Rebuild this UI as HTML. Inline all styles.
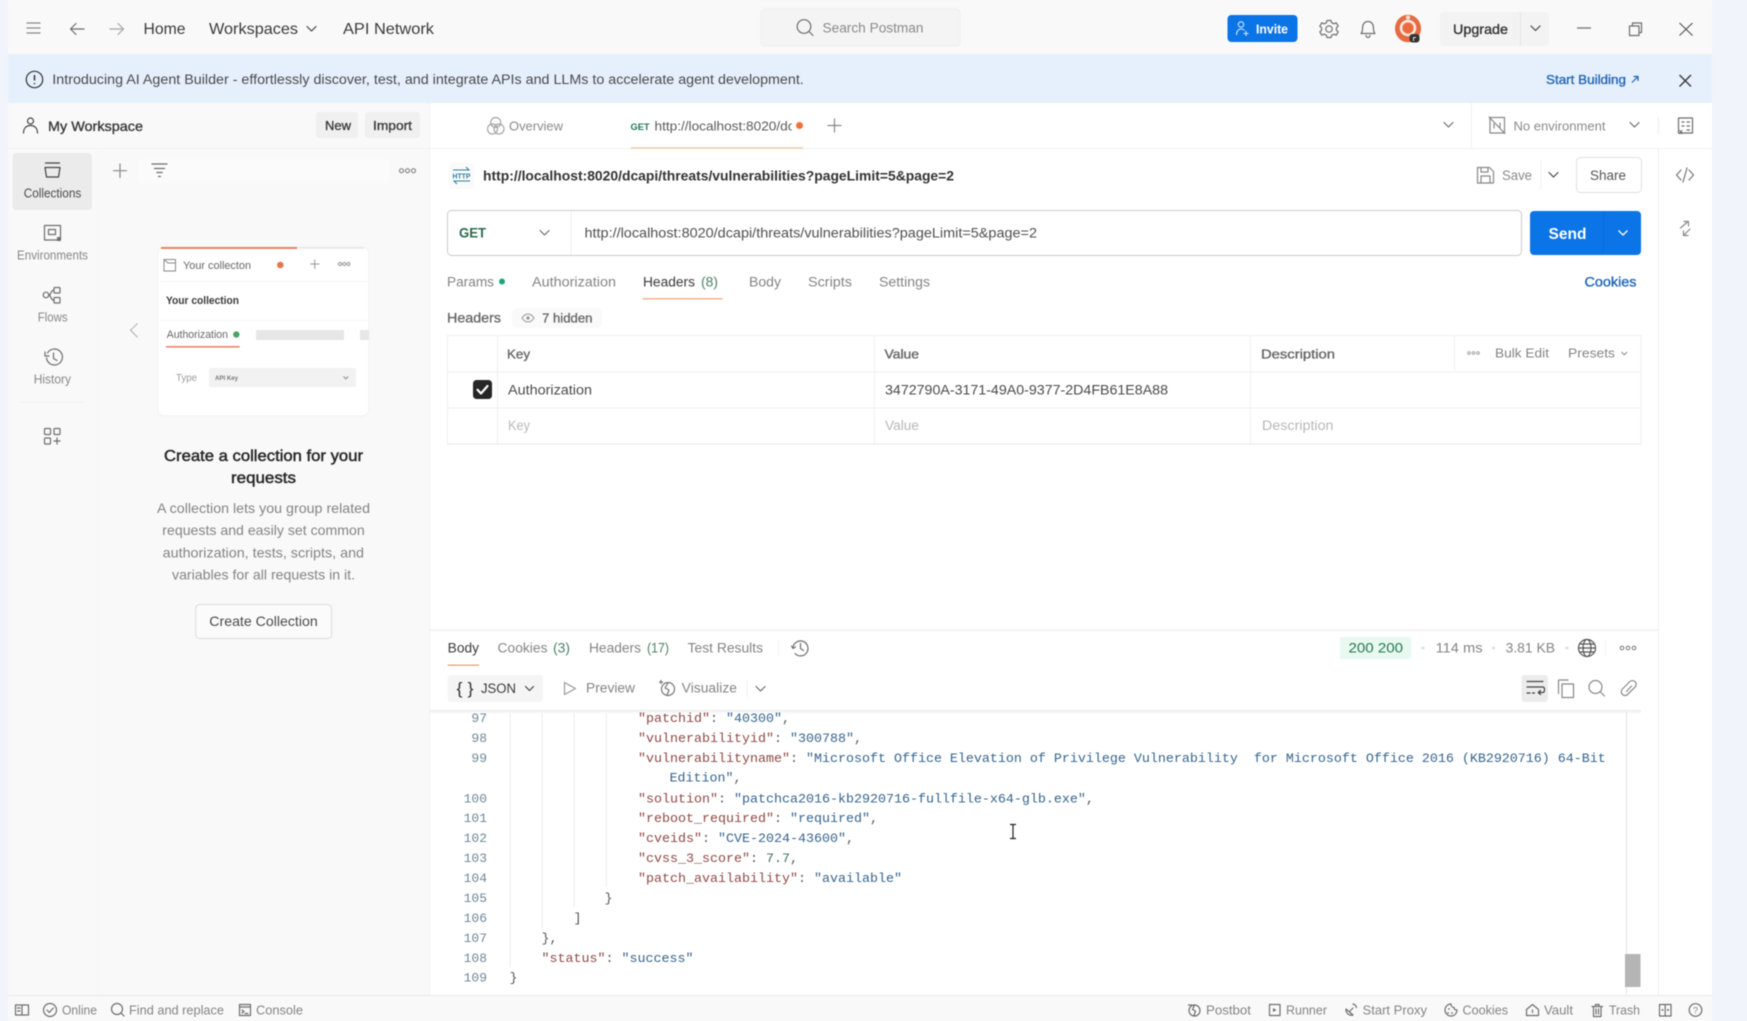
<!DOCTYPE html>
<html lang="en"><head><meta charset="utf-8"><title>Postman</title>
<style>
html,body{margin:0;padding:0;width:1747px;height:1021px;overflow:hidden;background:#f1f5fb}
svg{display:block;position:absolute;left:0;top:0;filter:blur(.4px)}
text{font-family:"Liberation Sans",Arial,sans-serif;white-space:pre}
.i{fill:none;stroke:#6e6e6e;stroke-width:1.2;stroke-linecap:round;stroke-linejoin:round}
.d{fill:none;stroke:#444;stroke-width:1.2;stroke-linecap:round;stroke-linejoin:round}
.g{fill:#7c7c7c}.b{fill:#333}
.code text{font-family:"Liberation Mono",monospace;font-size:13.33px;fill:#555}
.code .n{fill:#6e8794;font-size:13px}
.k{fill:#8c4a46}.v{fill:#36648c}.p{fill:#555}.q{fill:#3f6b5c}
</style></head><body>
<svg width="1747" height="1021" viewBox="0 0 1747 1021" xmlns="http://www.w3.org/2000/svg" lang="en">
<defs><clipPath id="tabclip"><rect x="650" y="115" width="142" height="24"/></clipPath>
<linearGradient id="sh" x1="0" y1="0" x2="0" y2="1"><stop offset="0" stop-color="#ececec"/><stop offset="1" stop-color="#fff"/></linearGradient></defs>

<!-- app surfaces -->
<rect x="8" y="0" width="1704" height="1021" fill="#fff"/>
<rect x="8" y="0" width="1704" height="54" fill="#f9f9f9"/>
<rect x="8" y="103" width="421" height="892" fill="#f9f9f9"/>
<rect x="8" y="995" width="1704" height="26" fill="#f9f9f9"/>
<rect x="8" y="54" width="1704" height="1" fill="#ededed"/>
<rect x="8" y="995" width="1704" height="1" fill="#e8e8e8"/>

<!-- top bar -->
<path class="i" d="M27 23h13M27 28h13M27 33h13" style="stroke:#888"/>
<path class="i" d="M84 29H71M76 23.500l-5.500 5.500 5.500 5.500"/>
<path class="i" d="M110 29h13M118 23.500l5.500 5.500-5.500 5.500" style="stroke:#a5a5a5"/>
<text x="143.500" y="34" font-size="16" fill="#3a3a3a" textLength="42" lengthAdjust="spacingAndGlyphs">Home</text>
<text x="209" y="34" font-size="16" fill="#3a3a3a" textLength="89" lengthAdjust="spacingAndGlyphs">Workspaces</text>
<path class="d" d="M307 26.500l4.500 4.500 4.500-4.500"/>
<text x="343" y="34" font-size="16" fill="#3a3a3a" textLength="91" lengthAdjust="spacingAndGlyphs">API Network</text>
<rect x="761" y="9" width="199" height="37" rx="4" fill="#f4f4f4" stroke="#eeeeee"/>
<circle cx="804" cy="26.500" r="6.800" class="i"/><path class="i" d="M809 31.500l4 4"/>
<text x="822.500" y="32.500" font-size="13.500" fill="#8a8a8a" textLength="101" lengthAdjust="spacingAndGlyphs">Search Postman</text>
<rect x="1227.500" y="15" width="70" height="27" rx="4" fill="#0b74e6"/>
<circle cx="1241" cy="24.500" r="2.700" fill="none" stroke="#cfe4fb" stroke-width="1.100"/>
<path d="M1236.500 35c0-4 2-6 4.500-6s3 .8 3.500 1.500M1246 31v5M1243.500 33.500h5" fill="none" stroke="#cfe4fb" stroke-width="1.100"/>
<text x="1256" y="33.500" font-size="13" font-weight="700" fill="#fff" textLength="32" lengthAdjust="spacingAndGlyphs">Invite</text>
<g class="i"><circle cx="1329" cy="29" r="3.200"/><path d="M1327 20.500h4l.7 2.300 2.300 1 2.200-1 2 3.400-1.800 1.600v2.400l1.800 1.600-2 3.400-2.200-1-2.300 1-.7 2.300h-4l-.7-2.300-2.300-1-2.200 1-2-3.400 1.800-1.600v-2.400l-1.800-1.600 2-3.400 2.200 1 2.300-1z"/></g>
<path class="i" d="M1361 33.500c1.500-1.500 1.600-3.500 1.600-6 0-3.500 2-6 5.400-6s5.400 2.500 5.400 6c0 2.500.1 4.500 1.600 6zM1366 35.500c.3 1.300 1.100 2 2 2s1.700-.7 2-2"/>
<ellipse cx="1408" cy="28.500" rx="13" ry="13.800" fill="#e56b42"/><circle cx="1408" cy="28" r="8.300" fill="#f7e8e0"/><circle cx="1408" cy="28" r="5.600" fill="#ee6b3d"/><circle cx="1408" cy="17.500" r="2.200" fill="#f5d6c8"/>
<rect x="1409.500" y="34" width="10" height="8.500" rx="3" fill="#333"/><path d="M1413.500 41v-3.500h2.500" stroke="#ddd" fill="none"/>
<rect x="1440" y="12" width="109" height="34" rx="4" fill="#f3f3f3"/><rect x="1520" y="12" width="1" height="34" fill="#e4e4e4"/>
<text x="1453" y="34" font-size="14" fill="#333" stroke="#333" stroke-width=".35" textLength="55" lengthAdjust="spacingAndGlyphs">Upgrade</text>
<path class="d" d="M1531 26l4.500 4.500 4.500-4.500"/>
<path class="i" d="M1577.500 28h13"/>
<path class="i" d="M1629.500 26h9.500v9.500h-9.500zM1632.500 26v-3h9v9.500h-2.500"/>
<path d="M1679.500 23l13 12.500M1692.500 23l-13 12.500" fill="none" stroke="#555" stroke-width="1.200"/>

<!-- banner -->
<rect x="8" y="55" width="1704" height="48" fill="#e5f0fc"/>
<circle cx="34.500" cy="79.500" r="8.200" fill="none" stroke="#333" stroke-width="1.200"/>
<path d="M34.500 75v5.500M34.500 83v1.300" stroke="#333" stroke-width="1.500" fill="none"/>
<text x="52.300" y="84" font-size="13.500" fill="#4a4a4a" textLength="751.500" lengthAdjust="spacingAndGlyphs">Introducing AI Agent Builder - effortlessly discover, test, and integrate APIs and LLMs to accelerate agent development.</text>
<text x="1546" y="84" font-size="12.500" fill="#1f63b2" stroke="#1f63b2" stroke-width=".3" textLength="80" lengthAdjust="spacingAndGlyphs">Start Building</text>
<path d="M1632 82.500l6-6M1633.500 76.500h4.500v4.500" fill="none" stroke="#1f63b2" stroke-width="1.200"/>
<path d="M1679.500 75l11.500 11.500M1691 75l-11.500 11.500" fill="none" stroke="#333" stroke-width="1.300"/>

<!-- sidebar header -->
<circle cx="30.500" cy="121" r="3" class="d"/><path class="d" d="M23.500 133c0-5 3-7.500 7-7.500s7 2.500 7 7.500"/>
<text x="48" y="131" font-size="14" fill="#3a3a3a" stroke="#3a3a3a" stroke-width=".35" textLength="95" lengthAdjust="spacingAndGlyphs">My Workspace</text>
<rect x="316" y="112" width="42" height="26" rx="3" fill="#f0f0f0"/><rect x="365" y="112" width="55" height="26" rx="3" fill="#f0f0f0"/>
<text x="325" y="130" font-size="13" fill="#3a3a3a" stroke="#3a3a3a" stroke-width=".35" textLength="26" lengthAdjust="spacingAndGlyphs">New</text>
<text x="373" y="130" font-size="13" fill="#3a3a3a" stroke="#3a3a3a" stroke-width=".35" textLength="39" lengthAdjust="spacingAndGlyphs">Import</text>
<rect x="8" y="148" width="1704" height="1" fill="#f2f2f2"/>
<rect x="429" y="103" width="1" height="892" fill="#f0f0f0"/>
<rect x="97.500" y="149" width="1" height="846" fill="#f5f5f5"/>

<!-- left rail -->
<rect x="12.700" y="153" width="79.300" height="57" rx="4" fill="#ebebeb"/>
<path class="d" d="M45.500 163h14M45 167.500h15l-1.500 9.500h-12z"/>
<text x="23.700" y="197.500" font-size="12.500" fill="#4a4a4a" textLength="57.600" lengthAdjust="spacingAndGlyphs">Collections</text>
<path class="i" d="M44.500 240v-14.500h16V240zM48.500 229.500h7v5h-7z"/><rect x="57" y="237" width="4" height="4" fill="#6e6e6e"/>
<text x="17" y="259.500" font-size="12.500" fill="#888" textLength="71" lengthAdjust="spacingAndGlyphs">Environments</text>
<g class="i"><circle cx="46" cy="295" r="2.800"/><rect x="54" y="287.500" width="6" height="5.500" rx="1"/><rect x="54" y="297.500" width="6" height="5.500" rx="1"/><path d="M48.800 295c2.500 0 1.500-4.500 5.200-5M48.800 295c2.500 0 1.500 5 5.200 5.500"/></g>
<text x="37.700" y="321.500" font-size="12.500" fill="#888" textLength="30" lengthAdjust="spacingAndGlyphs">Flows</text>
<path class="i" d="M46.500 358a8 8 0 1 0 1-5M45 352v4h4M53.500 353v5.500l3.500 2"/>
<text x="33.700" y="383.500" font-size="12.500" fill="#888" textLength="37.300" lengthAdjust="spacingAndGlyphs">History</text>
<rect x="20" y="401.500" width="65" height="1" fill="#f1f1f1"/>
<g class="i"><rect x="44.500" y="428.500" width="6" height="6" rx="1"/><rect x="54" y="428.500" width="6" height="6" rx="1"/><rect x="44.500" y="438" width="6" height="6" rx="1"/><path d="M54 441h6M57 438v6"/></g>

<!-- collections pane -->
<path class="i" d="M113.500 170.700h13M120 164v13.500" style="stroke:#888"/>
<rect x="138" y="159" width="251" height="24" rx="3" fill="#fbfbfb"/>
<path class="i" d="M152 164h15M154.500 168.500h10M156.800 172.500h5.500M158.500 176.500h2"/>
<g class="i" style="stroke:#888"><circle cx="401.500" cy="170.700" r="2"/><circle cx="407.500" cy="170.700" r="2"/><circle cx="413.500" cy="170.700" r="2"/></g>
<path d="M137.500 323.500l-7 6.700 7 7" fill="none" stroke="#b5b5b5" stroke-width="1.100"/>
<rect x="157.700" y="247" width="211.300" height="169" rx="7" fill="#fff" stroke="#f1f1f1"/>
<rect x="161" y="247" width="203" height="1.800" fill="#e9e9e9"/><rect x="161" y="247" width="136" height="2" fill="#e88466"/>
<path d="M164 259.500h11.500V271H164zM164 259.500l4 3.500h7.500" fill="none" stroke="#888" stroke-width="1"/>
<text x="183" y="269" font-size="11" fill="#666" textLength="68" lengthAdjust="spacingAndGlyphs">Your collecton</text>
<circle cx="280.300" cy="265" r="3.300" fill="#e8754c"/>
<path d="M310 264h9.500M314.700 259.500v9.500" stroke="#999" fill="none"/>
<g fill="none" stroke="#999"><circle cx="340" cy="264" r="1.500"/><circle cx="344.300" cy="264" r="1.500"/><circle cx="348.500" cy="264" r="1.500"/></g>
<rect x="160" y="281" width="208" height="1" fill="#f7f7f7"/>
<text x="166" y="304" font-size="11" font-weight="700" fill="#3a3a3a" textLength="73" lengthAdjust="spacingAndGlyphs">Your collection</text>
<rect x="160" y="320" width="208" height="1" fill="#f7f7f7"/>
<text x="166.700" y="338" font-size="11" fill="#666" textLength="61.300" lengthAdjust="spacingAndGlyphs">Authorization</text>
<circle cx="236.300" cy="334.500" r="3.200" fill="#4aa561"/>
<rect x="166" y="346" width="73.700" height="1.600" fill="#e88466"/>
<rect x="256" y="330" width="88" height="10" fill="#e7e7e7"/><rect x="360" y="330" width="9" height="10" fill="#e7e7e7"/>
<text x="176" y="381" font-size="10" fill="#9a9a9a" textLength="21" lengthAdjust="spacingAndGlyphs">Type</text>
<rect x="209" y="368" width="147" height="19" rx="2" fill="#f2f2f2"/>
<text x="215" y="380" font-size="6" font-weight="700" fill="#777" textLength="23" lengthAdjust="spacingAndGlyphs">API Key</text>
<path d="M343.500 376.500l2.300 2.300 2.300-2.300" fill="none" stroke="#888"/>
<text x="164" y="461" font-size="16" fill="#262626" stroke="#262626" stroke-width=".45" textLength="199" lengthAdjust="spacingAndGlyphs">Create a collection for your</text>
<text x="231" y="483" font-size="16" fill="#262626" stroke="#262626" stroke-width=".45" textLength="65" lengthAdjust="spacingAndGlyphs">requests</text>
<g font-size="14" fill="#848484">
<text x="157" y="513" textLength="213" lengthAdjust="spacingAndGlyphs">A collection lets you group related</text>
<text x="162.300" y="535" textLength="202.400" lengthAdjust="spacingAndGlyphs">requests and easily set common</text>
<text x="162.700" y="557.500" textLength="201.300" lengthAdjust="spacingAndGlyphs">authorization, tests, scripts, and</text>
<text x="172" y="579.500" textLength="183" lengthAdjust="spacingAndGlyphs">variables for all requests in it.</text>
</g>
<rect x="195.700" y="604.500" width="136" height="34" rx="4" fill="#fbfbfb" stroke="#dcdcdc"/>
<text x="209.300" y="626" font-size="14" fill="#4a4a4a" textLength="108.400" lengthAdjust="spacingAndGlyphs">Create Collection</text>

<!-- tabs row -->
<g class="i" style="stroke:#a5a5a5"><circle cx="492.500" cy="129" r="5"/><circle cx="499" cy="129" r="5"/><circle cx="495.700" cy="122.500" r="5"/></g>
<text x="509" y="130.500" font-size="13" fill="#8a8a8a" textLength="54" lengthAdjust="spacingAndGlyphs">Overview</text>
<text x="630.500" y="130" font-size="9.500" font-weight="700" fill="#1f7a4f" textLength="19" lengthAdjust="spacingAndGlyphs">GET</text>
<g clip-path="url(#tabclip)"><text x="654.500" y="130.500" font-size="13" fill="#5a5a5a" textLength="140" lengthAdjust="spacingAndGlyphs">http://localhost:8020/dc</text></g>
<circle cx="799.500" cy="125.500" r="3.500" fill="#f0703f"/>
<rect x="631" y="147" width="172" height="2" fill="#e8d6be"/>
<path class="i" d="M828 125.500h13M834.500 119v13" style="stroke:#888"/>
<path class="i" d="M1444 122.500l4.500 4.500 4.500-4.500"/>
<rect x="1471" y="103" width="1" height="45" fill="#f2f2f2"/>
<path class="i" d="M1490 117.500h14.500V133H1490zM1489 117l16 16.500M1494 124v4M1500 123v4" style="stroke:#888"/>
<text x="1513.500" y="130.500" font-size="13" fill="#8a8a8a" textLength="92" lengthAdjust="spacingAndGlyphs">No environment</text>
<path class="i" d="M1630 122.500l4.500 4.500 4.500-4.500"/>
<rect x="1658" y="117" width="1" height="18" fill="#ececec"/>
<path class="i" d="M1678.500 118h14v15h-14zM1682 122h2M1687 122h2.500M1682 126h2M1687 126h2.500M1687 130h2.500"/>
<text x="1679" y="134" font-size="7" font-weight="700" fill="#555">x</text>

<!-- right rail -->
<rect x="1658" y="149" width="1" height="846" fill="#eeeeee"/>
<path class="i" d="M1681 170l-4.500 5 4.500 5M1689 170l4.500 5-4.500 5M1687 168l-4 14" style="stroke:#777"/>
<path class="i" d="M1680.500 228l7.500-6.500M1684 221.500h4.500v4.500M1690 229l-6.500 6.500M1683.500 231v4.500h4.500" style="stroke:#888"/>

<!-- url title row -->
<rect x="449" y="163" width="25" height="26" rx="4" fill="#fafafa"/>
<path d="M453 170h16l-3-3M470 181h-16l3 3" fill="none" stroke="#2a7f9e" stroke-width="1"/>
<text x="452.500" y="178.500" font-size="7.500" font-weight="700" fill="#2a7f9e" textLength="18" lengthAdjust="spacingAndGlyphs">HTTP</text>
<text x="483" y="180.500" font-size="13.500" font-weight="700" fill="#333" textLength="471" lengthAdjust="spacingAndGlyphs">http://localhost:8020/dcapi/threats/vulnerabilities?pageLimit=5&amp;page=2</text>
<path class="i" d="M1477.500 167.500h12l4 4v11.500h-16zM1481 167.500v4.500h7v-4.500M1481 183v-7h9v7" style="stroke:#888"/>
<text x="1502" y="180" font-size="13.500" fill="#8a8a8a" textLength="30" lengthAdjust="spacingAndGlyphs">Save</text>
<rect x="1540.500" y="160" width="1" height="30" fill="#f2f2f2"/>
<path class="d" d="M1549 172.500l4.500 4.500 4.500-4.500"/>
<rect x="1576.500" y="157.500" width="65" height="35" rx="4" fill="#fff" stroke="#e0e0e0"/>
<text x="1590" y="180" font-size="13.500" fill="#555" textLength="36" lengthAdjust="spacingAndGlyphs">Share</text>

<!-- url input -->
<rect x="447.500" y="210.500" width="1074" height="45" rx="4" fill="#fff" stroke="#cbcbcb"/>
<rect x="570.500" y="211" width="1" height="44" fill="#eeeeee"/>
<text x="459" y="237.500" font-size="14" font-weight="700" fill="#2b6a4c" textLength="27" lengthAdjust="spacingAndGlyphs">GET</text>
<path class="i" d="M540 230.500l4.500 4.500 4.500-4.500"/>
<text x="584.500" y="237.500" font-size="13.500" fill="#505050" textLength="452.500" lengthAdjust="spacingAndGlyphs">http://localhost:8020/dcapi/threats/vulnerabilities?pageLimit=5&amp;page=2</text>
<rect x="1530" y="211" width="111" height="44" rx="4" fill="#0b74e6"/><rect x="1603" y="211" width="1" height="44" fill="#0a6dd9"/>
<text x="1548.500" y="239" font-size="16" font-weight="700" fill="#fff" textLength="38" lengthAdjust="spacingAndGlyphs">Send</text>
<path d="M1618.500 230.500l4.500 4.500 4.500-4.500" fill="none" stroke="#fff" stroke-width="1.300"/>

<!-- request tabs -->
<g font-size="13.500" fill="#848484">
<text x="447" y="286.500" textLength="47" lengthAdjust="spacingAndGlyphs">Params</text>
<text x="532" y="286.500" textLength="84" lengthAdjust="spacingAndGlyphs">Authorization</text>
<text x="643" y="286.500" textLength="52" lengthAdjust="spacingAndGlyphs" fill="#3a3a3a">Headers</text>
<text x="701" y="286.500" textLength="17" lengthAdjust="spacingAndGlyphs" fill="#4a8066">(8)</text>
<text x="749" y="286.500" textLength="32" lengthAdjust="spacingAndGlyphs">Body</text>
<text x="808" y="286.500" textLength="44" lengthAdjust="spacingAndGlyphs">Scripts</text>
<text x="879" y="286.500" textLength="51" lengthAdjust="spacingAndGlyphs">Settings</text>
</g>
<circle cx="502" cy="281.500" r="3" fill="#1ea672"/>
<rect x="642.500" y="298" width="80" height="1.500" fill="#f2b48a"/>
<text x="1584.500" y="286.500" font-size="13.500" fill="#2066b5" stroke="#2066b5" stroke-width=".35" textLength="52" lengthAdjust="spacingAndGlyphs">Cookies</text>

<text x="447" y="322.500" font-size="13.500" fill="#666" stroke="#666" stroke-width=".3" textLength="54" lengthAdjust="spacingAndGlyphs">Headers</text>
<rect x="512" y="308" width="90" height="20" rx="5" fill="#fafafa"/>
<path d="M522 318c2-3 4-4 6-4s4 1 6 4c-2 3-4 4-6 4s-4-1-6-4z" fill="none" stroke="#999" stroke-width="1.100"/><circle cx="528" cy="318" r="1.700" fill="#999"/>
<text x="542" y="322.500" font-size="13" fill="#666" stroke="#666" stroke-width=".3" textLength="50.500" lengthAdjust="spacingAndGlyphs">7 hidden</text>

<!-- headers table -->
<g fill="#f0f0f0">
<rect x="447" y="335" width="1194" height="1"/><rect x="447" y="371.500" width="1194" height="1"/><rect x="447" y="407.500" width="1194" height="1"/>
<rect x="447" y="443.500" width="1194" height="1" fill="#e6e6e6"/>
<rect x="447" y="335" width="1" height="109"/><rect x="497" y="335" width="1" height="109"/><rect x="874" y="335" width="1" height="109"/><rect x="1250" y="335" width="1" height="109"/><rect x="1454" y="335" width="1" height="36"/><rect x="1640.500" y="335" width="1" height="109"/>
</g>
<g font-size="13" fill="#666" stroke="#666" stroke-width=".35">
<text x="507" y="358.500" textLength="23" lengthAdjust="spacingAndGlyphs">Key</text>
<text x="884.500" y="358.500" textLength="34.500" lengthAdjust="spacingAndGlyphs">Value</text>
<text x="1261" y="358.500" textLength="74" lengthAdjust="spacingAndGlyphs">Description</text>
</g>
<g fill="none" stroke="#999" stroke-width=".9"><circle cx="1469" cy="353" r="1.300"/><circle cx="1473.500" cy="353" r="1.300"/><circle cx="1478" cy="353" r="1.300"/></g>
<text x="1495" y="357.500" font-size="13" fill="#848484" textLength="54" lengthAdjust="spacingAndGlyphs">Bulk Edit</text>
<text x="1568" y="357.500" font-size="13" fill="#848484" textLength="47" lengthAdjust="spacingAndGlyphs">Presets</text>
<path d="M1621.500 352l2.800 2.800 2.800-2.800" fill="none" stroke="#888"/>
<rect x="473" y="380" width="19" height="19" rx="3.500" fill="#262626"/>
<path d="M477.500 389.800l3.500 3.700 6.500-7.500" fill="none" stroke="#fff" stroke-width="2.200" stroke-linecap="round" stroke-linejoin="round"/>
<text x="508" y="394.500" font-size="13.500" fill="#4a4a4a" textLength="84" lengthAdjust="spacingAndGlyphs">Authorization</text>
<text x="885" y="394.500" font-size="13.500" fill="#4a4a4a" textLength="283" lengthAdjust="spacingAndGlyphs">3472790A-3171-49A0-9377-2D4FB61E8A88</text>
<g font-size="13.500" fill="#b8b8b8">
<text x="508" y="430" textLength="22" lengthAdjust="spacingAndGlyphs">Key</text>
<text x="885" y="430" textLength="34" lengthAdjust="spacingAndGlyphs">Value</text>
<text x="1262" y="430" textLength="71.500" lengthAdjust="spacingAndGlyphs">Description</text>
</g>

<!-- response header -->
<rect x="430" y="629" width="1228" height="2" fill="#f3f3f3"/>
<text x="447.700" y="652.500" font-size="13.500" fill="#3a3a3a" textLength="31.300" lengthAdjust="spacingAndGlyphs">Body</text>
<rect x="447.700" y="664.500" width="31.300" height="1.300" fill="#ee9e7c"/>
<g font-size="13.500" fill="#848484">
<text x="497.500" y="652.500" textLength="50" lengthAdjust="spacingAndGlyphs">Cookies</text>
<text x="553" y="652.500" textLength="17" lengthAdjust="spacingAndGlyphs" fill="#4a8066">(3)</text>
<text x="589" y="652.500" textLength="52" lengthAdjust="spacingAndGlyphs">Headers</text>
<text x="647" y="652.500" textLength="22" lengthAdjust="spacingAndGlyphs" fill="#4a8066">(17)</text>
<text x="687.600" y="652.500" textLength="75.400" lengthAdjust="spacingAndGlyphs">Test Results</text>
</g>
<rect x="778" y="640" width="1" height="16" fill="#f2f2f2"/>
<path class="i" d="M793 648a7.500 7.500 0 1 1 2 5.500M791.500 646l1.500 2.500 2.500-1.500M800.500 643.500v5l3 2"/>
<rect x="1340" y="637" width="71" height="22" rx="2" fill="#e8f9f0"/>
<text x="1348.500" y="652.500" font-size="13.500" fill="#25754f" textLength="54.500" lengthAdjust="spacingAndGlyphs">200 200</text>
<g fill="#dedede"><circle cx="1423" cy="648" r="1.500"/><circle cx="1493.500" cy="648" r="1.500"/><circle cx="1567" cy="648" r="1.500"/></g>
<text x="1435.600" y="652.500" font-size="13.500" fill="#848484" textLength="47" lengthAdjust="spacingAndGlyphs">114 ms</text>
<text x="1505.600" y="652.500" font-size="13.500" fill="#848484" textLength="49.400" lengthAdjust="spacingAndGlyphs">3.81 KB</text>
<g class="i" style="stroke:#555"><circle cx="1587" cy="648" r="8.500"/><ellipse cx="1587" cy="648" rx="4" ry="8.500"/><path d="M1578.500 648h17M1579.700 644h14.600M1579.700 652h14.600"/></g>
<rect x="1605" y="640" width="1" height="16" fill="#f2f2f2"/>
<g fill="none" stroke="#777" stroke-width="1"><circle cx="1622" cy="648" r="1.800"/><circle cx="1628" cy="648" r="1.800"/><circle cx="1634" cy="648" r="1.800"/></g>

<rect x="447.700" y="675" width="95.300" height="27" rx="3" fill="#f5f5f5"/>
<text x="456.500" y="694" font-size="17" fill="#333" textLength="17" lengthAdjust="spacingAndGlyphs">{ }</text>
<text x="481" y="693" font-size="13.500" fill="#3a3a3a" textLength="35" lengthAdjust="spacingAndGlyphs">JSON</text>
<path class="d" d="M525.500 686.500l4 4 4-4"/>
<path class="i" d="M564.500 682.500l11 6-11 6z" style="stroke:#999"/>
<text x="586" y="692.500" font-size="13.500" fill="#848484" textLength="49" lengthAdjust="spacingAndGlyphs">Preview</text>
<g class="i" style="stroke:#777"><circle cx="668" cy="689" r="6.500"/><path d="M668 683l-3 5 4 2-2 5M659.500 682h3M661 680.500v3"/></g>
<text x="681.700" y="692.500" font-size="13.500" fill="#848484" textLength="55.300" lengthAdjust="spacingAndGlyphs">Visualize</text>
<rect x="746.500" y="680" width="1" height="17" fill="#efefef"/>
<path class="i" d="M756 686.500l4.500 4.500 4.500-4.500"/>
<rect x="1521.500" y="675" width="26.500" height="27" rx="3" fill="#ececec"/>
<path class="d" d="M1527 681.500h16M1527 687h16c2 0 2 5.500 0 5.500h-4M1540.500 690.500l-2.300 2 2.300 2M1527 693h3M1532.500 693h2"/>
<path class="i" d="M1562 684h11.500v13.500H1562zM1558.500 693.500V681a1 1 0 0 1 1-1h8.500" style="stroke:#888"/>
<circle cx="1595.500" cy="687" r="6.500" class="i" style="stroke:#888"/><path class="i" d="M1600.500 692l4 4" style="stroke:#888"/>
<g class="i" style="stroke:#888"><rect x="1625" y="679" width="7.500" height="18" rx="3.700" transform="rotate(45 1628.700 688)"/><path d="M1626.500 691.500l5-5.500"/></g>

<!-- code pane -->
<rect x="430" y="710" width="1211" height="4" fill="url(#sh)"/>
<g fill="#ececec">
<rect x="509.500" y="713" width="1" height="254"/><rect x="541.500" y="713" width="1" height="215"/><rect x="573.500" y="713" width="1" height="194"/><rect x="605.800" y="713" width="1" height="174"/>
</g>
<g class="code">
<text class="n" x="487" y="722" text-anchor="end">97</text>
<text class="n" x="487" y="741.900" text-anchor="end">98</text>
<text class="n" x="487" y="761.800" text-anchor="end">99</text>
<text class="n" x="487" y="802.600" text-anchor="end">100</text>
<text class="n" x="487" y="822" text-anchor="end">101</text>
<text class="n" x="487" y="842" text-anchor="end">102</text>
<text class="n" x="487" y="862" text-anchor="end">103</text>
<text class="n" x="487" y="882.200" text-anchor="end">104</text>
<text class="n" x="487" y="902.100" text-anchor="end">105</text>
<text class="n" x="487" y="922" text-anchor="end">106</text>
<text class="n" x="487" y="941.900" text-anchor="end">107</text>
<text class="n" x="487" y="961.800" text-anchor="end">108</text>
<text class="n" x="487" y="981.700" text-anchor="end">109</text>
<text x="638" y="722"><tspan class="k">"patchid"</tspan>: <tspan class="v">"40300"</tspan>,</text>
<text x="638" y="741.900"><tspan class="k">"vulnerabilityid"</tspan>: <tspan class="v">"300788"</tspan>,</text>
<text x="638" y="761.800"><tspan class="k">"vulnerabilityname"</tspan>: <tspan class="v">"Microsoft Office Elevation of Privilege Vulnerability  for Microsoft Office 2016 (KB2920716) 64-Bit</tspan></text>
<text x="669.500" y="781.700"><tspan class="v">Edition"</tspan>,</text>
<text x="638" y="802.600"><tspan class="k">"solution"</tspan>: <tspan class="v">"patchca2016-kb2920716-fullfile-x64-glb.exe"</tspan>,</text>
<text x="638" y="822"><tspan class="k">"reboot_required"</tspan>: <tspan class="v">"required"</tspan>,</text>
<text x="638" y="842"><tspan class="k">"cveids"</tspan>: <tspan class="v">"CVE-2024-43600"</tspan>,</text>
<text x="638" y="862"><tspan class="k">"cvss_3_score"</tspan>: <tspan class="q">7.7</tspan>,</text>
<text x="638" y="882.200"><tspan class="k">"patch_availability"</tspan>: <tspan class="v">"available"</tspan></text>
<text x="604.500" y="902.100">}</text>
<text x="573.500" y="922">]</text>
<text x="541.500" y="941.900">},</text>
<text x="541.500" y="961.800"><tspan class="k">"status"</tspan>: <tspan class="v">"success"</tspan></text>
<text x="509.500" y="981.700">}</text>
</g>
<rect x="1626" y="711" width="1" height="284" fill="#e2e2e2"/>
<rect x="1625" y="954" width="15.500" height="33" fill="#b5b5b5"/>
<path d="M1010 824.500h6M1010 838.500h6M1013 824.500v14" stroke="#222" stroke-width="1.200" fill="none"/>

<!-- status bar -->
<path class="i" d="M15.500 1005h13v10h-13zM22 1005v10M17.500 1008h2.500M17.500 1011h2.500"/>
<circle cx="50" cy="1010" r="6.500" class="i"/><path class="i" d="M47 1010l2.300 2.500 4-4.500"/>
<text x="62" y="1014.500" font-size="13" fill="#848484" textLength="35" lengthAdjust="spacingAndGlyphs">Online</text>
<circle cx="117" cy="1009" r="5.500" class="i"/><path class="i" d="M121 1013l3 3"/>
<text x="129" y="1014.500" font-size="13" fill="#848484" textLength="95" lengthAdjust="spacingAndGlyphs">Find and replace</text>
<path class="i" d="M239.500 1004.500h11v11h-11zM239.500 1007h11M242 1010l2 1.500-2 1.500M245 1013.500h3"/>
<text x="256" y="1014.500" font-size="13" fill="#848484" textLength="47" lengthAdjust="spacingAndGlyphs">Console</text>
<g class="i"><circle cx="1194.500" cy="1010.500" r="5.500"/><path d="M1194.500 1005l-2 4.500 3 1.500-1.500 4.500M1188.500 1005h3"/></g>
<text x="1206" y="1014.500" font-size="13" fill="#848484" textLength="45" lengthAdjust="spacingAndGlyphs">Postbot</text>
<path class="i" d="M1269.500 1004.500h10.500v11h-10.500z"/><path d="M1273 1008l3.500 2-3.500 2z" fill="#6e6e6e"/>
<text x="1286" y="1014.500" font-size="13" fill="#848484" textLength="41" lengthAdjust="spacingAndGlyphs">Runner</text>
<path class="i" d="M1346 1009a5.500 5.500 0 0 0 7 6zM1350 1011l3-3M1353 1004c2 .5 3 1.500 3.500 3.500"/>
<text x="1362.500" y="1014.500" font-size="13" fill="#848484" textLength="64.500" lengthAdjust="spacingAndGlyphs">Start Proxy</text>
<path class="i" d="M1451 1004a6 6 0 1 0 6 6c-2 0-3-1-3-2.500-1.800 0-3-1.500-3-3.500z"/><g fill="#6e6e6e"><circle cx="1449" cy="1009" r=".9"/><circle cx="1452" cy="1013" r=".9"/><circle cx="1448" cy="1013" r=".9"/></g>
<text x="1462.500" y="1014.500" font-size="13" fill="#848484" textLength="45.500" lengthAdjust="spacingAndGlyphs">Cookies</text>
<path class="i" d="M1526.500 1009.500l6-5 6 5v6h-12zM1532.500 1010v2.500"/>
<text x="1544" y="1014.500" font-size="13" fill="#848484" textLength="29" lengthAdjust="spacingAndGlyphs">Vault</text>
<path class="i" d="M1592 1006.500h10.500M1595.500 1006.500v-2h3.500v2M1593.500 1006.500v10h7.500v-10M1596 1009v5M1598.500 1009v5"/>
<text x="1609" y="1014.500" font-size="13" fill="#848484" textLength="31" lengthAdjust="spacingAndGlyphs">Trash</text>
<path class="i" d="M1659.500 1004.500h11.500v11.500h-11.500zM1665.200 1004.500v11.500"/><g fill="#6e6e6e"><circle cx="1662.500" cy="1010" r="1"/><circle cx="1668" cy="1010" r="1"/></g>
<circle cx="1695.500" cy="1010" r="6.300" class="i"/><text x="1693" y="1013.500" font-size="9" fill="#848484">?</text>
</svg>
</body></html>
